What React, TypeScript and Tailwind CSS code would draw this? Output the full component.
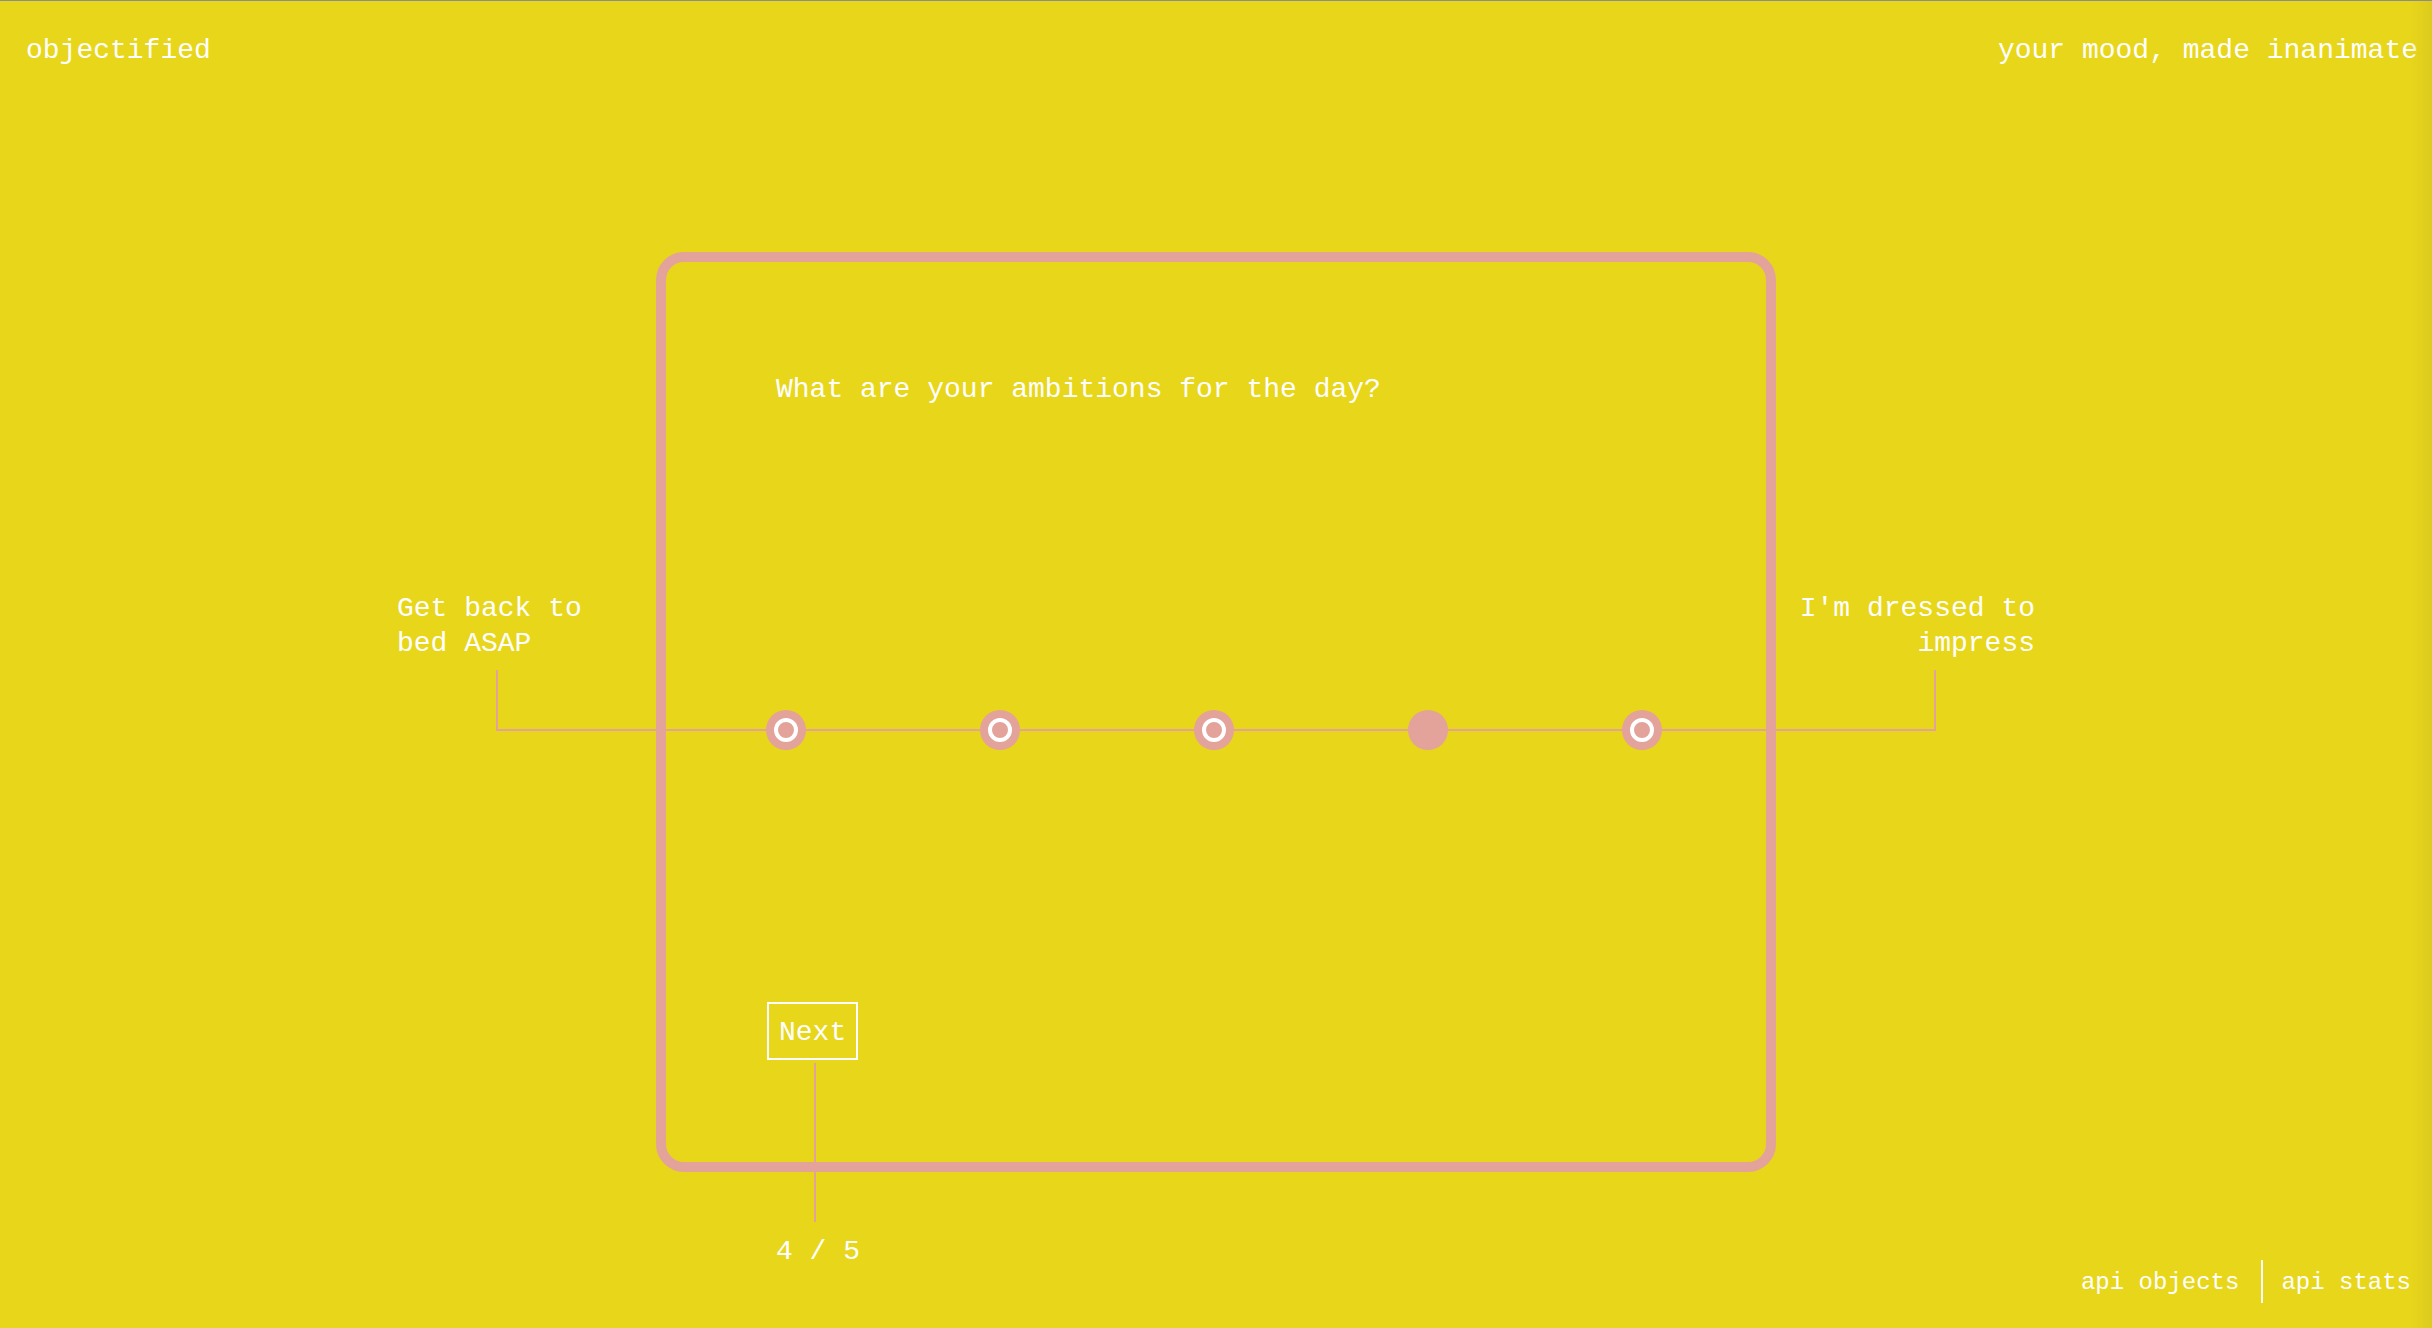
import React from 'react'

const mono = { fontFamily: '"Liberation Mono", "DejaVu Sans Mono", monospace' }

const Dot: React.FC<{ selected?: boolean }> = ({ selected }) => (
  <div className="flex h-10 w-10 shrink-0 items-center justify-center rounded-full bg-[#e3a29a]">
    {!selected && <div className="h-6 w-6 rounded-full border-4 border-white" />}
  </div>
)

const App: React.FC = () => {
  const steps = [false, false, false, true, false]

  return (
    <div
      className="relative flex h-[1328px] w-full flex-col overflow-hidden border-t border-[#8c8c8c] bg-[#e8d61b] text-white"
      style={mono}
    >
      <header className="flex justify-between pl-[26px] pr-[14px] pt-[32px] text-[28px] leading-[36px]">
        <span>objectified</span>
        <span>your mood, made inanimate</span>
      </header>

      <div className="mx-auto mt-[183px] h-[920px] w-[1120px] shrink-0 rounded-[28px] border-[10px] border-[#e3a29a] px-[100px] pt-[110px] text-[28px] leading-[36px]">
        <div className="flex flex-col">
          <p className="ml-[10px]">What are your ambitions for the day?</p>

          <div className="-mx-[369px] mt-[183px]">
            <div className="flex justify-between leading-[35px]">
              <div className="w-[200px]">
                Get back to
                <br />
                bed ASAP
              </div>
              <div className="text-right">
                I'm dressed to
                <br />
                impress
              </div>
            </div>
            <div className="relative mx-[99px] mt-[9px] h-[61px] border-x-2 border-b-2 border-[#e3a29a]">
              <div className="absolute inset-x-0 bottom-[-21px] flex gap-[174px] pl-[268px]">
                {steps.map((selected, i) => (
                  <Dot key={i} selected={selected} />
                ))}
              </div>
            </div>
          </div>

          <button className="ml-px mt-[271px] self-start border-2 border-white px-[10px] pb-[7px] pt-[11px] leading-[36px]">
            Next
          </button>
          <div className="ml-[48px] mt-[3px] h-[159px] w-[2px] bg-[#e3a29a]" />
          <p className="ml-[10px] mt-[12px]">4 / 5</p>
        </div>
      </div>

      <footer className="mt-auto mb-[25px] flex justify-end pr-[21px] text-[24px] leading-[27px]">
        <span className="pb-[7px] pr-[22px] pt-[9px]">api objects</span>
        <span className="border-l-2 border-white pb-[7px] pl-[18px] pt-[9px]">api stats</span>
      </footer>

      <div className="pointer-events-none absolute right-0 top-0 h-full w-[22px] bg-linear-to-r from-transparent to-[#dccb1e]" />
    </div>
  )
}

export default App
